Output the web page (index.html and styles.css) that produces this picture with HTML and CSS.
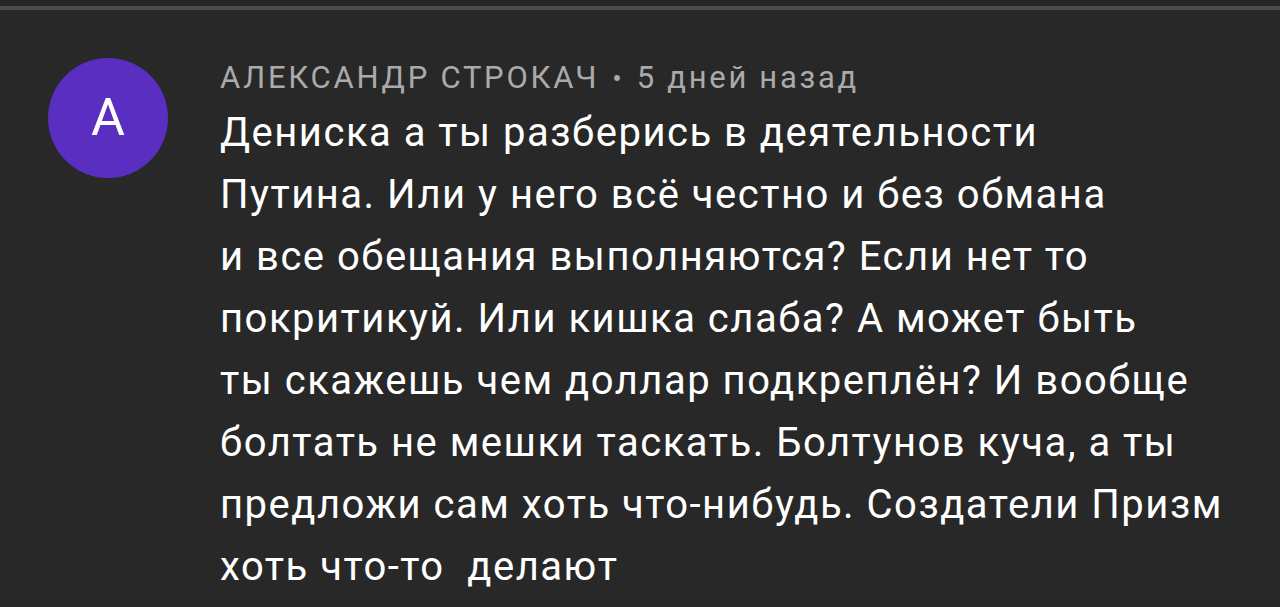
FILE: index.html
```html
<!DOCTYPE html>
<html lang="ru">
<head>
<meta charset="utf-8">
<link rel="stylesheet" href="styles.css">
</head>
<body>
<div class="topbar"></div>
<div class="comment">
  <div class="avatar">А</div>
  <div class="content">
    <div class="meta"><span class="author">АЛЕКСАНДР СТРОКАЧ</span><span class="dot">•</span><span class="time">5 дней назад</span></div>
    <div class="text">Дениска а ты разберись в деятельности<br>Путина. Или у него всё честно и без обмана<br>и все обещания выполняются? Если нет то<br>покритикуй. Или кишка слаба? А может быть<br>ты скажешь чем доллар подкреплён? И вообще<br>болтать не мешки таскать. Болтунов куча, а ты<br>предложи сам хоть что-нибудь. Создатели Призм<br>хоть что-то&nbsp; делают</div>
  </div>
</div>
</body>
</html>
```

FILE: styles.css
```css
html, body {
  margin: 0;
  padding: 0;
  background: #282828;
  height: 607px;
  overflow: hidden;
}
body {
  font-family: Roboto, "Noto Sans", sans-serif;
  color: #ffffff;
}
.topbar {
  height: 6px;
  background: #262626;
  border-bottom: 4px solid #4b4b4b;
}
.comment {
  display: flex;
  padding: 48px 0 0 48px;
  gap: 52px;
}
.avatar {
  flex: none;
  width: 120px;
  height: 120px;
  border-radius: 50%;
  background: #5a2ec0;
  color: #fff;
  font-size: 52px;
  display: flex;
  align-items: center;
  justify-content: center;
  line-height: 1;
}
.content {
  padding-top: 2px;
}
.meta {
  font-size: 31px;
  color: #aaaaaa;
  line-height: 36px;
  display: flex;
  align-items: baseline;
}
.author {
  letter-spacing: 2.75px;
}
.dot {
  font-size: 28px;
  margin: 0 15px 0 13px;
}
.time {
  letter-spacing: 2.7px;
}
.text {
  font-size: 40px;
  line-height: 62px;
  margin-top: 5px;
  letter-spacing: 1.5px;
}
```
